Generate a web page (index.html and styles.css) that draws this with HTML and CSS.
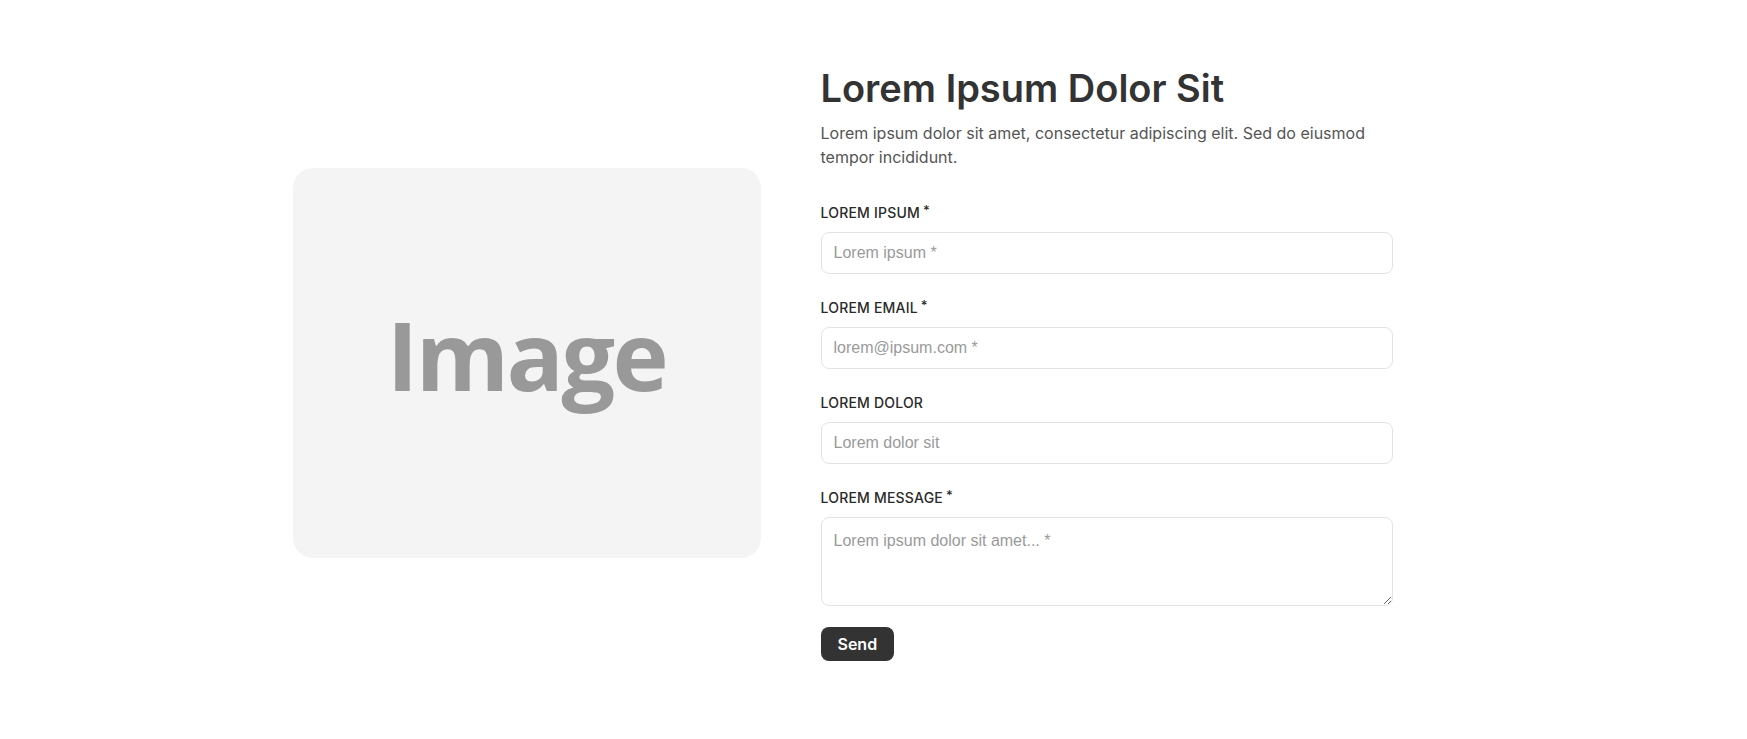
FILE: index.html
```html
<!DOCTYPE html>
<html lang="en">
<head>
    <meta charset="UTF-8">
    <meta name="viewport" content="width=device-width, initial-scale=1.0">
    <title>Contact</title>
    <link rel="stylesheet" href="styles.css">
</head>
<body>
    <section class="contact">
        <div class="contact-image">
            <span>Image</span>
        </div>

        <div class="contact-body">
            <h1>Lorem Ipsum Dolor Sit</h1>
            <p class="intro">Lorem ipsum dolor sit amet, consectetur adipiscing elit. Sed do eiusmod tempor incididunt.</p>

            <form class="contact-form">
                <div class="form-group">
                    <label for="name">Lorem Ipsum<sup>*</sup></label>
                    <input type="text" id="name" placeholder="Lorem ipsum *">
                </div>

                <div class="form-group">
                    <label for="email">Lorem Email<sup>*</sup></label>
                    <input type="email" id="email" placeholder="lorem@ipsum.com *">
                </div>

                <div class="form-group">
                    <label for="subject">Lorem Dolor</label>
                    <input type="text" id="subject" placeholder="Lorem dolor sit">
                </div>

                <div class="form-group">
                    <label for="message">Lorem Message<sup>*</sup></label>
                    <textarea id="message" placeholder="Lorem ipsum dolor sit amet... *"></textarea>
                </div>

                <button type="submit">Send</button>
            </form>
        </div>
    </section>
</body>
</html>
```

FILE: styles.css
```css
/* Base */
body {
    margin: 0;
    background: #fff;
    font-family: Inter, "Liberation Sans", sans-serif;
    color: #333;
}

.contact {
    width: 1162px;
    margin: 0 auto;
    padding-top: 65px;
    display: flex;
    align-items: center;
    gap: 60px;
}

/* Image placeholder */
.contact-image {
    width: 468px;
    height: 390px;
    flex-shrink: 0;
    background: #f4f4f4;
    border-radius: 20px;
    display: flex;
    align-items: center;
    justify-content: center;
}

.contact-image span {
    margin-bottom: 18px;
    font-family: "Open Sans", sans-serif;
    font-weight: 700;
    font-size: 95px;
    color: #999;
    letter-spacing: -2.5px;
}

/* Form column */
.contact-body {
    width: 572px;
}

h1 {
    margin: 0;
    font-size: 38px;
    font-weight: 600;
    color: #333;
}

.intro {
    margin: 10px 0 34px;
    font-size: 16px;
    line-height: 24px;
    color: #555;
}

.form-group {
    margin-bottom: 24px;
}

label {
    display: block;
    margin-bottom: 9px;
    font-size: 14px;
    line-height: 20px;
    font-weight: 500;
    text-transform: uppercase;
    letter-spacing: 0.2px;
    color: #2a2a2a;
}

label sup {
    font-size: 13px;
    line-height: 0;
    margin-left: 3px;
    vertical-align: 3px;
}

input,
textarea {
    display: block;
    box-sizing: border-box;
    width: 100%;
    padding: 0 12px;
    border: 1px solid #e3e3e3;
    border-radius: 8px;
    font-family: "Liberation Sans", Arial, sans-serif;
    font-size: 16px;
    color: #333;
    background: #fff;
}

input {
    height: 42px;
}

textarea {
    height: 89px;
    padding-top: 14px;
}

input::placeholder,
textarea::placeholder {
    color: #9a9a9a;
}

input:focus,
textarea:focus {
    outline: none;
    border-color: #bbb;
}

.form-group:last-of-type {
    margin-bottom: 21px;
}

button {
    height: 34px;
    padding: 0 17px;
    border: none;
    border-radius: 8px;
    background: #333;
    color: #fff;
    font-family: Inter, sans-serif;
    font-size: 16px;
    font-weight: 600;
    cursor: pointer;
}

button:hover {
    background: #111;
}
```
